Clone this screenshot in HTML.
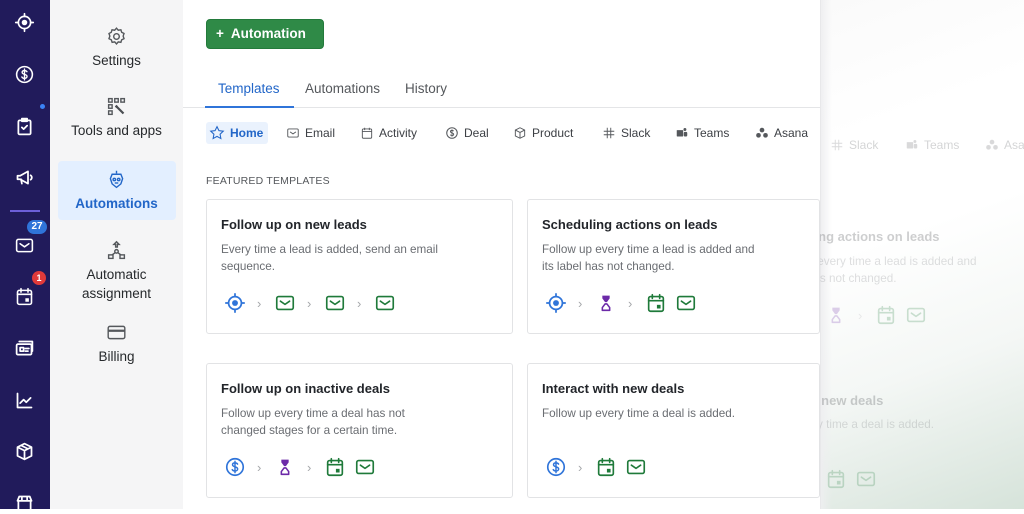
<!DOCTYPE html>
<html><head><meta charset="utf-8"><style>
*{margin:0;padding:0;box-sizing:border-box}
body{width:1024px;height:509px;overflow:hidden;font-family:"Liberation Sans",sans-serif;background:#fff;position:relative}
.a{position:absolute}
#rail{left:0;top:0;width:50px;height:509px;background:#211b5b;color:#fff}
#rail svg{position:absolute;left:14px;width:21px;height:21px;fill:none;stroke:#fff;stroke-width:2;stroke-linecap:round;stroke-linejoin:round}
#side{left:50px;top:0;width:133px;height:509px;background:#f5f5f6}
.si{position:absolute;left:0;width:133px;text-align:center;font-size:13.5px;color:#26292c;line-height:19px}
.si svg{display:block;margin:0 auto 4px;width:21px;height:21px;fill:none;stroke:#55585c;stroke-width:1.6}
#main{left:183px;top:0;width:637px;height:509px;background:#fff;overflow:hidden}
.btn{left:23px;top:19px;width:118px;height:30px;background:#2f8a47;border-radius:4px;border:1px solid #237a3b;color:#fff;font-weight:bold;font-size:13.5px;line-height:28px;padding-left:9px}
.tab{top:81px;font-size:13.5px;color:#55585c}
.chip{top:122px;height:22px;font-size:12px;color:#3d4045;line-height:22px;display:flex;align-items:center;gap:5px}
.chip svg{width:14px;height:14px;fill:none;stroke:#55585c;stroke-width:1.6}
.card{border:1px solid #e2e3e5;border-radius:3px;background:#fff;width:307px;height:135px}
.card h3{position:absolute;left:14px;top:17px;font-size:13px;color:#22252a}
.card p{position:absolute;left:14px;top:42px;font-size:11.7px;color:#6a6d72;line-height:16.5px;width:240px}
.ic{position:absolute;top:92px;height:22px;display:flex;align-items:center}
.ic svg{width:22px;height:22px;fill:none;stroke-width:1.7;stroke-linecap:round;stroke-linejoin:round}
.ar{color:#a5a7aa;font-size:13px;margin:0 11px;width:6px}
.gap{width:8px}
</style></head><body>
<svg width="0" height="0" style="position:absolute">
<defs>
<symbol id="tgt" viewBox="0 0 24 24"><circle cx="12" cy="12" r="7" fill="none" stroke="currentColor" stroke-width="1.9"/><circle cx="12" cy="12" r="3.2" fill="currentColor" stroke="none"/><path d="M12 2v3M12 19v3M2 12h3M19 12h3" stroke="currentColor" stroke-width="1.9"/></symbol>
<symbol id="mail" viewBox="0 0 24 24"><rect x="3" y="5" width="18" height="14" rx="2" fill="none" stroke="currentColor" stroke-width="1.8"/><path d="M7 10l5 3.5 5-3.5" fill="none" stroke="currentColor" stroke-width="1.8"/></symbol>
<symbol id="cal" viewBox="0 0 24 24"><rect x="4" y="5" width="16" height="16" rx="2" fill="none" stroke="currentColor" stroke-width="1.8"/><path d="M8 3v4M16 3v4M4 9.5h16" stroke="currentColor" stroke-width="1.8"/><rect x="13" y="14" width="4" height="4" fill="currentColor" stroke="none"/></symbol>
<symbol id="hour" viewBox="0 0 24 24"><path d="M8 4h8v3l-3 4h-2L8 7z" fill="currentColor" stroke="none"/><path d="M11 13h2l3 4v3H8v-3z" fill="none" stroke="currentColor" stroke-width="1.7"/></symbol>
<symbol id="usd" viewBox="0 0 24 24"><circle cx="12" cy="12" r="9" fill="none" stroke="currentColor" stroke-width="1.8"/><path d="M14.8 8.8c-.5-.8-1.5-1.3-2.8-1.3-1.6 0-2.7.8-2.7 2.1 0 2.9 5.6 1.6 5.6 4.6 0 1.3-1.2 2.2-2.9 2.2-1.4 0-2.5-.6-3-1.5M12 5.8v12.4" fill="none" stroke="currentColor" stroke-width="1.6"/></symbol>
</defs></svg>

<div id="rail" class="a">
<svg style="top:12px" viewBox="0 0 24 24"><use href="#tgt"/></svg>
<svg style="top:64px" viewBox="0 0 24 24"><use href="#usd"/></svg>
<svg style="top:116px" viewBox="0 0 24 24"><rect x="5" y="5" width="14" height="16" rx="1.5"/><path d="M9 3h6v3H9zM9 13l2 2 4-4"/></svg>
<div class="a" style="left:40px;top:104px;width:5px;height:5px;border-radius:50%;background:#3b82f6"></div>
<svg style="top:167px" viewBox="0 0 24 24"><path d="M4 10v4h3l9 5V5L7 10zM8 14l1 5M19 9.5a3 3 0 010 5"/></svg>
<div class="a" style="left:10px;top:210px;width:30px;height:2px;background:#6d5fd8"></div>
<svg style="top:235px" viewBox="0 0 24 24"><use href="#mail"/></svg>
<div class="a" style="left:27px;top:220px;width:20px;height:14px;border-radius:7px;background:#2f74d9;color:#fff;font-size:10px;font-weight:bold;text-align:center;line-height:14px">27</div>
<svg style="top:286px" viewBox="0 0 24 24"><use href="#cal"/></svg>
<div class="a" style="left:32px;top:271px;width:14px;height:14px;border-radius:7px;background:#e03a3a;color:#fff;font-size:9px;font-weight:bold;text-align:center;line-height:14px">1</div>
<svg style="top:338px" viewBox="0 0 24 24"><rect x="3" y="7" width="17" height="12" rx="1.5"/><path d="M6 4h15v11M7 11h4v4H7zM13 12h4M13 15h3"/></svg>
<svg style="top:390px" viewBox="0 0 24 24"><path d="M4 4v16h16M7 15l4-4 3 3 5-5"/></svg>
<svg style="top:441px" viewBox="0 0 24 24"><path d="M12 3l8 4v10l-8 4-8-4V7zM4 7l8 4 8-4M12 11v10M8 5l8 4"/></svg>
<svg style="top:493px" viewBox="0 0 24 24"><path d="M4 9l2-5h12l2 5zM5 9v11h14V9M9 4v5M15 4v5"/></svg>
</div>

<div id="side" class="a">
<div class="si" style="top:26px"><svg viewBox="0 0 24 24"><circle cx="12" cy="12" r="3.2"/><path d="M12 2.5l2 2.3 3-.5.9 2.9 2.7 1.4-1 2.9 1 2.9-2.7 1.4-.9 2.9-3-.5-2 2.3-2-2.3-3 .5-.9-2.9L3.4 14.4l1-2.9-1-2.9L6 7.2l.9-2.9 3 .5z"/></svg>Settings</div>
<div class="si" style="top:96px"><svg viewBox="0 0 24 24"><rect x="3" y="3" width="4" height="4"/><rect x="10" y="3" width="4" height="4"/><rect x="17" y="3" width="4" height="4"/><rect x="3" y="10" width="4" height="4"/><rect x="3" y="17" width="4" height="4"/><path d="M11 11l9 9M13 11l-2 2" stroke-width="2.5" stroke="#4a4d52"/></svg>Tools and apps</div>
<div class="a" style="left:8px;top:161px;width:118px;height:59px;background:#e3efff;border-radius:4px"></div>
<div class="si" style="top:169px;color:#2266c8;font-weight:bold"><svg viewBox="0 0 24 24" style="stroke:#2266c8"><path d="M12 2v3M7 6h10l2 5-2 6-5 4-5-4-2-6z"/><circle cx="9.5" cy="12" r="1.4"/><circle cx="14.5" cy="12" r="1.4"/><path d="M10 16h4"/></svg>Automations</div>
<div class="si" style="top:240px"><svg viewBox="0 0 24 24"><path d="M12 2l3 3h-2v3h-2V5H9z"/><circle cx="12" cy="13" r="2"/><rect x="3" y="17" width="5" height="4"/><rect x="16" y="17" width="5" height="4"/><path d="M10.5 14.5L7 17M13.5 14.5L17 17"/></svg>Automatic<br>assignment</div>
<div class="si" style="top:322px"><svg viewBox="0 0 24 24"><rect x="2.5" y="5" width="19" height="14" rx="2"/><path d="M2.5 10h19" stroke-width="2.5"/></svg>Billing</div>
</div>

<div class="a" style="left:820px;top:0;width:204px;height:509px;overflow:hidden;background:linear-gradient(160deg,#fafafa 0%,#fff 25%,#fff 45%,#f4f7f5 70%,#d6e3da 100%)">
<div class="a" style="left:0;top:0;width:12px;height:509px;background:linear-gradient(90deg,#eeeef0,rgba(250,250,250,0))"></div>
</div>

<div id="main" class="a">
<div class="a btn">+&nbsp; Automation</div>
<div class="a tab" style="left:35px;color:#2266c8">Templates</div>
<div class="a tab" style="left:122px">Automations</div>
<div class="a tab" style="left:222px">History</div>
<div class="a" style="left:0;top:107px;width:637px;height:1px;background:#e4e5e7"></div>
<div class="a" style="left:22px;top:106px;width:89px;height:2px;background:#2f74d9"></div>
<div class="a" style="left:23px;top:122px;width:62px;height:22px;background:#eaf2fd;border-radius:3px"></div>
<div class="a chip" style="left:26px;color:#2266c8;font-weight:bold"><svg viewBox="0 0 24 24" style="stroke:#2266c8;width:16px;height:16px"><path d="M12 2.5l2.9 6 6.5.8-4.8 4.5 1.2 6.5L12 17.1l-5.8 3.2 1.2-6.5L2.6 9.3l6.5-.8z"/></svg>Home</div>
<div class="a chip" style="left:103px"><svg viewBox="0 0 24 24"><rect x="3" y="5" width="18" height="14" rx="2"/><path d="M7 10l5 3.5 5-3.5"/></svg>Email</div>
<div class="a chip" style="left:177px"><svg viewBox="0 0 24 24"><rect x="4" y="5" width="16" height="16" rx="2"/><path d="M8 3v4M16 3v4M4 9.5h16"/></svg>Activity</div>
<div class="a chip" style="left:262px"><svg viewBox="0 0 24 24" style="color:#55585c"><use href="#usd"/></svg>Deal</div>
<div class="a chip" style="left:330px"><svg viewBox="0 0 24 24"><path d="M12 3l8 4v10l-8 4-8-4V7zM4 7l8 4 8-4M12 11v10"/></svg>Product</div>
<div class="a chip" style="left:419px"><svg viewBox="0 0 24 24"><path d="M9 3v18M15 3v18M3 9h18M3 15h18"/></svg>Slack</div>
<div class="a chip" style="left:492px"><svg viewBox="0 0 24 24" style="fill:#55585c;stroke:none"><rect x="3" y="7" width="11" height="11" rx="1"/><circle cx="17" cy="6" r="2.5"/><rect x="15" y="10" width="6" height="8" rx="2"/></svg>Teams</div>
<div class="a chip" style="left:572px"><svg viewBox="0 0 24 24" style="fill:#55585c;stroke:none"><circle cx="12" cy="7" r="4"/><circle cx="6" cy="16" r="4"/><circle cx="18" cy="16" r="4"/></svg>Asana</div>
<div class="a" style="left:23px;top:175px;font-size:10.5px;color:#55585c;letter-spacing:.2px">FEATURED TEMPLATES</div>

<div class="a card" style="left:23px;top:199px"><h3>Follow up on new leads</h3><p>Every time a lead is added, send an email sequence.</p>
<div class="ic" style="left:17px"><svg style="color:#2f74d9"><use href="#tgt"/></svg><span class="ar">›</span><svg style="color:#1f7a3a"><use href="#mail"/></svg><span class="ar">›</span><svg style="color:#1f7a3a"><use href="#mail"/></svg><span class="ar">›</span><svg style="color:#1f7a3a"><use href="#mail"/></svg></div></div>
<div class="a card" style="left:344px;top:199px;width:293px"><h3>Scheduling actions on leads</h3><p style="width:225px">Follow up every time a lead is added and its label has not changed.</p>
<div class="ic" style="left:17px"><svg style="color:#2f74d9"><use href="#tgt"/></svg><span class="ar">›</span><svg style="color:#6c2aa8"><use href="#hour"/></svg><span class="ar">›</span><svg style="color:#1f7a3a"><use href="#cal"/></svg><span class="gap"></span><svg style="color:#1f7a3a"><use href="#mail"/></svg></div></div>
<div class="a card" style="left:23px;top:363px"><h3>Follow up on inactive deals</h3><p style="width:200px">Follow up every time a deal has not changed stages for a certain time.</p>
<div class="ic" style="left:17px"><svg style="color:#2f74d9"><use href="#usd"/></svg><span class="ar">›</span><svg style="color:#6c2aa8"><use href="#hour"/></svg><span class="ar">›</span><svg style="color:#1f7a3a"><use href="#cal"/></svg><span class="gap"></span><svg style="color:#1f7a3a"><use href="#mail"/></svg></div></div>
<div class="a card" style="left:344px;top:363px;width:293px"><h3>Interact with new deals</h3><p>Follow up every time a deal is added.</p>
<div class="ic" style="left:17px"><svg style="color:#2f74d9"><use href="#usd"/></svg><span class="ar">›</span><svg style="color:#1f7a3a"><use href="#cal"/></svg><span class="gap"></span><svg style="color:#1f7a3a"><use href="#mail"/></svg></div></div>
</div>
<div class="a" style="left:820px;top:0;width:1px;height:509px;background:#e8e8ea"></div>

<div class="a" style="left:820px;top:0;width:204px;height:509px;overflow:hidden;opacity:0.22;pointer-events:none">
<div class="a chip" style="left:10px;top:134px"><svg viewBox="0 0 24 24"><path d="M9 3v18M15 3v18M3 9h18M3 15h18"/></svg>Slack</div>
<div class="a chip" style="left:85px;top:134px"><svg viewBox="0 0 24 24" style="fill:#55585c;stroke:none"><rect x="3" y="7" width="11" height="11" rx="1"/><circle cx="17" cy="6" r="2.5"/><rect x="15" y="10" width="6" height="8" rx="2"/></svg>Teams</div>
<div class="a chip" style="left:165px;top:134px"><svg viewBox="0 0 24 24" style="fill:#55585c;stroke:none"><circle cx="12" cy="7" r="4"/><circle cx="6" cy="16" r="4"/><circle cx="18" cy="16" r="4"/></svg>Asana</div>
<div class="a" style="left:-56px;top:229px;font-size:13px;font-weight:bold;color:#22252a">Scheduling actions on leads</div>
<div class="a" style="left:-56px;top:254px;font-size:11.7px;color:#6a6d72;line-height:16.5px;width:225px">Follow up every time a lead is added and its label has not changed.</div>
<div class="ic" style="left:5px;top:304px"><svg style="color:#6c2aa8"><use href="#hour"/></svg><span class="ar">›</span><svg style="color:#1f7a3a"><use href="#cal"/></svg><span class="gap"></span><svg style="color:#1f7a3a"><use href="#mail"/></svg></div>
<div class="a" style="left:-79px;top:393px;font-size:13px;font-weight:bold;color:#22252a">Interact with new deals</div>
<div class="a" style="left:-79px;top:418px;font-size:11.7px;color:#6a6d72">Follow up every time a deal is added.</div>
<div class="ic" style="left:5px;top:468px"><svg style="color:#1f7a3a"><use href="#cal"/></svg><span class="gap"></span><svg style="color:#1f7a3a"><use href="#mail"/></svg></div>
</div>
</body></html>
